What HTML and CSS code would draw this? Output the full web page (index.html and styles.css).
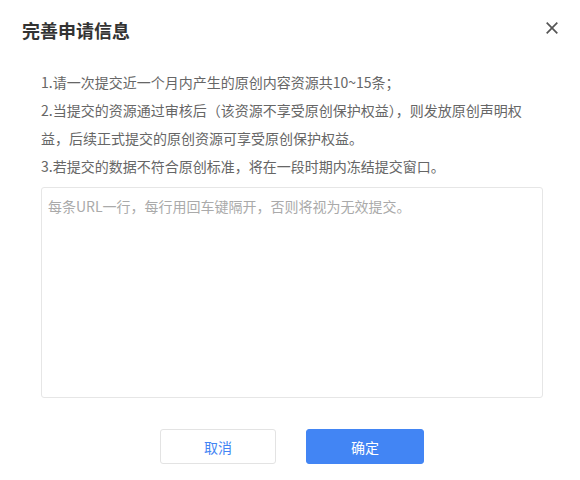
FILE: index.html
```html
<!DOCTYPE html>
<html lang="zh-CN">
<head>
<meta charset="utf-8">
<title>完善申请信息</title>
<link rel="stylesheet" href="styles.css">
</head>
<body>
<div class="dialog">
  <div class="header">
    <h2 class="title">完善申请信息</h2>
    <button class="close" aria-label="关闭">
      <svg width="12" height="12" viewBox="0 0 12 12"><path d="M0.7 0.7 L11.3 11.3 M11.3 0.7 L0.7 11.3" stroke="#555" stroke-width="1.7" fill="none"/></svg>
    </button>
  </div>
  <div class="body">
    <div class="rules">
      <p>1.请一次提交近一个月内产生的原创内容资源共10~15条；</p>
      <p>2.当提交的资源通过审核后（该资源不享受原创保护权益），则发放原创声明权益，后续正式提交的原创资源可享受原创保护权益。</p>
      <p>3.若提交的数据不符合原创标准，将在一段时期内冻结提交窗口。</p>
    </div>
    <textarea class="urls" placeholder="每条URL一行，每行用回车键隔开，否则将视为无效提交。"></textarea>
    <div class="actions">
      <button class="btn btn-cancel">取消</button>
      <button class="btn btn-ok">确定</button>
    </div>
  </div>
</div>
</body>
</html>
```
FILE: styles.css
```css
html, body {
  margin: 0;
  padding: 0;
  background: #fff;
}
body {
  font-family: "Noto Sans CJK SC", "Liberation Sans", sans-serif;
}
.dialog {
  width: 580px;
  height: 480px;
  background: #fff;
}
.header {
  display: flex;
  justify-content: space-between;
  align-items: center;
  padding: 18px 22px 0 22px;
  height: 24px;
}
.title {
  margin: 0;
  font-size: 18px;
  line-height: 24px;
  font-weight: bold;
  color: #333;
}
.close {
  border: 0;
  background: none;
  padding: 0;
  width: 12px;
  height: 12px;
  display: flex;
  margin-top: -4px;
  cursor: pointer;
}
.body {
  padding: 26px 37px 0 41px;
}
.rules {
  width: 495px;
  color: #666;
  font-size: 14px;
  line-height: 28px;
}
.rules p {
  margin: 0;
}
.urls {
  display: block;
  box-sizing: border-box;
  width: 502px;
  height: 211px;
  margin: 7px 0 0 0;
  padding: 8px 6px;
  border: 1px solid #e6e6e6;
  border-radius: 3px;
  font-family: "Noto Sans CJK SC", "Liberation Sans", sans-serif;
  font-size: 14px;
  line-height: 20px;
  color: #333;
  resize: none;
  outline: none;
}
.urls::placeholder {
  color: #aaa;
}
.actions {
  display: flex;
  gap: 30px;
  margin-top: 31px;
  padding-left: 119px;
}
.btn {
  height: 35px;
  border-radius: 3px;
  font-family: "Noto Sans CJK SC", "Liberation Sans", sans-serif;
  font-size: 14px;
  cursor: pointer;
  padding: 0;
}
.btn-cancel {
  width: 116px;
  background: #fff;
  border: 1px solid #e3e3e3;
  color: #4285f4;
}
.btn-ok {
  width: 118px;
  background: #4285f4;
  border: 1px solid #4285f4;
  color: #fff;
}
```
